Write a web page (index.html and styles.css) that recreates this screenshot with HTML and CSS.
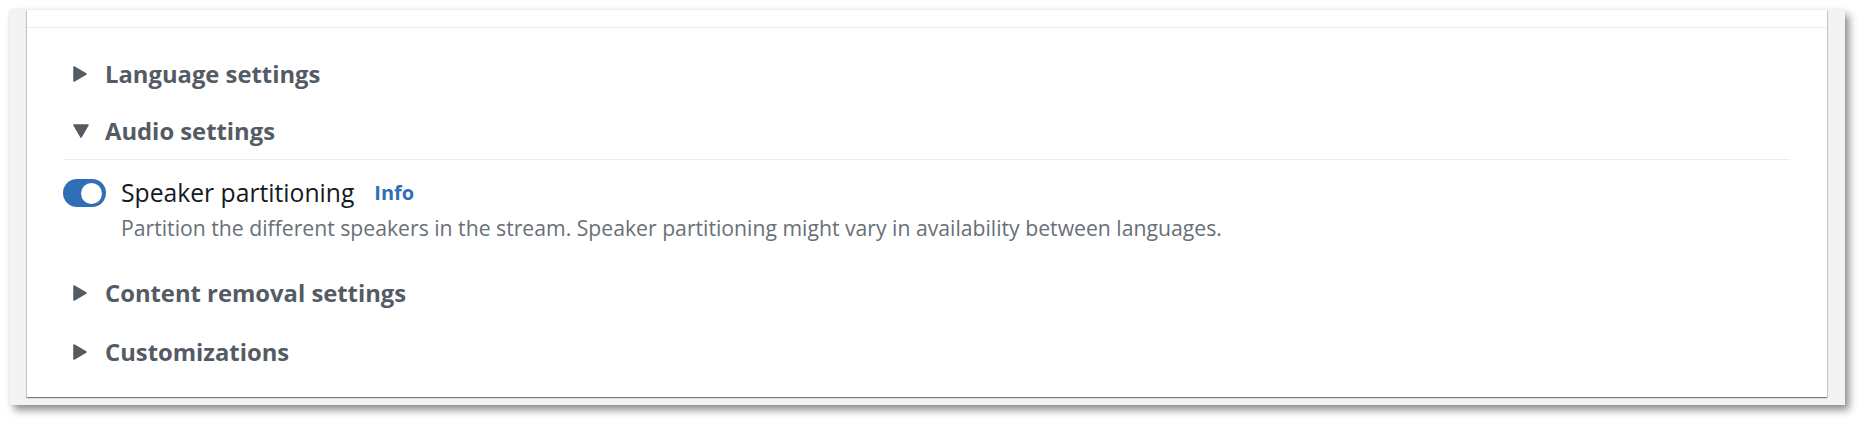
FILE: index.html
```html
<!DOCTYPE html>
<html lang="en">
<head>
<meta charset="utf-8">
<title>Audio settings</title>
<link rel="stylesheet" href="styles.css">
</head>
<body>
<div class="frame">
  <div class="panel">
    <div class="prev"></div>
    <div class="content">
      <div class="exp">
        <svg class="caret" width="16" height="16" viewBox="0 0 16 16"><polygon points="1,1 13,8 1,15" /></svg>
        <span class="exp-title">Language settings</span>
      </div>
      <div class="exp exp-open">
        <svg class="caret" width="16" height="16" viewBox="0 0 16 16"><polygon points="1,2 15,2 8,14" /></svg>
        <span class="exp-title">Audio settings</span>
      </div>
      <div class="exp-body">
        <div class="toggle-row">
          <span class="toggle"><span class="knob"></span></span>
          <div class="toggle-text">
            <div class="label-line"><span class="label">Speaker partitioning</span><a class="info">Info</a></div>
            <div class="desc">Partition the different speakers in the stream. Speaker partitioning might vary in availability between languages.</div>
          </div>
        </div>
      </div>
      <div class="exp exp-tall">
        <svg class="caret" width="16" height="16" viewBox="0 0 16 16"><polygon points="1,1 13,8 1,15" /></svg>
        <span class="exp-title">Content removal settings</span>
      </div>
      <div class="exp exp-tall">
        <svg class="caret" width="16" height="16" viewBox="0 0 16 16"><polygon points="1,1 13,8 1,15" /></svg>
        <span class="exp-title">Customizations</span>
      </div>
    </div>
  </div>
</div>
</body>
</html>
```
FILE: styles.css
```css
html, body {
  margin: 0;
  padding: 0;
  background: #ffffff;
}
body {
  padding: 10px 19px 19px 10px;
  font-family: "Open Sans", "Noto Sans", Arial, sans-serif;
}
.frame {
  background: #f2f3f3;
  padding: 0 18px 8px 17px;
  box-shadow: 4px 5px 8px rgba(0, 0, 0, 0.45), 0 0 3px rgba(0, 0, 0, 0.08);
}
.panel {
  background: #ffffff;
  box-shadow: 0 1px 1px 0 rgba(0, 28, 36, 0.35), 1px 1px 1px 0 rgba(0, 28, 36, 0.15), -1px 1px 1px 0 rgba(0, 28, 36, 0.15);
}
.prev {
  height: 17px;
  border-bottom: 1px solid #eaeded;
}
.content {
  padding: 17px 37px 16px 36px;
}
.exp {
  height: 58px;
  display: flex;
  align-items: center;
  padding-left: 10px;
  gap: 16px;
}
.exp-open {
  height: 56px;
  border-bottom: 1px solid #eaeded;
}
.exp-tall {
  height: 59px;
}
.caret {
  display: block;
  flex: none;
}
.caret polygon {
  fill: #545b64;
  stroke: #545b64;
  stroke-width: 1.5;
  stroke-linejoin: round;
}
.exp-title {
  font-size: 23.8px;
  font-weight: 700;
  color: #545b64;
  line-height: 30px;
}
.exp-body {
  padding: 19px 0 22px 0;
}
.toggle-row {
  display: flex;
  align-items: flex-start;
  gap: 15px;
}
.toggle {
  flex: none;
  width: 43px;
  height: 28px;
  border-radius: 14px;
  background: #2f6fb7;
  display: flex;
  align-items: center;
  justify-content: flex-end;
  padding-right: 4px;
  box-sizing: border-box;
}
.knob {
  width: 21px;
  height: 21px;
  border-radius: 50%;
  background: #ffffff;
}
.label-line {
  display: flex;
  align-items: center;
  gap: 20px;
  height: 28px;
}
.label {
  font-size: 24.7px;
  color: #16191f;
  line-height: 28px;
}
.info {
  font-size: 20px;
  font-weight: 700;
  color: #2f6fb7;
  line-height: 28px;
}
.desc {
  margin-top: 8px;
  font-size: 21.2px;
  line-height: 26px;
  color: #687078;
}
```
